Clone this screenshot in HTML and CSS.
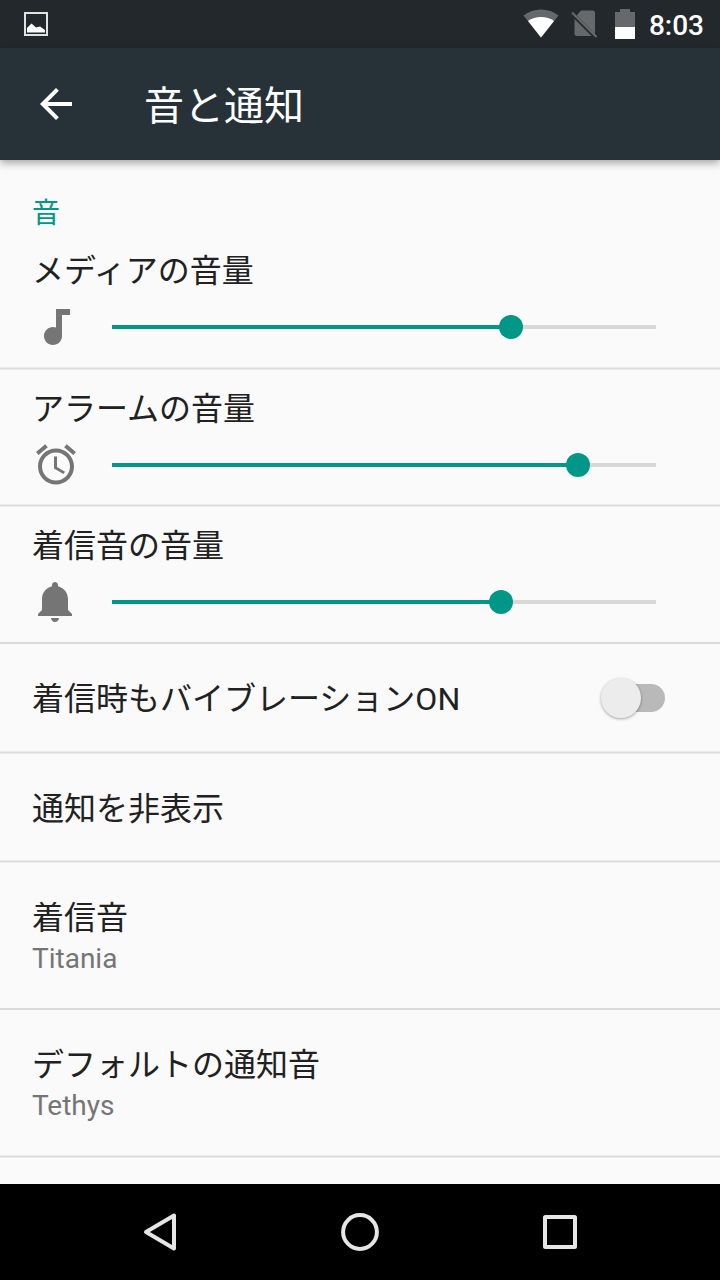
FILE: index.html
```html
<!DOCTYPE html>
<html lang="ja">
<head>
<meta charset="utf-8">
<title>音と通知</title>
<link rel="stylesheet" href="styles.css">
</head>
<body>
<div class="screen">
  <header class="status-bar">
    <svg class="status-picture" width="24" height="24" viewBox="0 0 24 24"><rect x="1" y="1" width="22" height="22" fill="none" stroke="#dfe2e1" stroke-width="2"/><path d="M3 20.500V16L7.500 11.500L12 15.500L16 14.500L21 18V20.500Z" fill="#fff"/></svg>
    <svg class="status-wifi" width="36" height="30" viewBox="0 0 36 30"><path d="M0.500 6.500C10-1.500 26-1.500 35.500 6.500L18 28.500Z" fill="#65696c"/><path d="M5 12C12 6.500 24 6.500 31 12L18 28.500Z" fill="#fff"/></svg>
    <svg class="status-sim" width="28" height="30" viewBox="0 0 28 30"><path d="M10 1.500H21.500Q24 1.500 24 4V25.200L5.700 6.500Z M3.500 10L20.500 27H6Q3.500 27 3.500 24.500Z" fill="#65696c"/><path d="M1 3.500L25.500 28" stroke="#65696c" stroke-width="2.200"/></svg>
    <svg class="status-battery" width="20" height="30" viewBox="0 0 20 30"><path d="M5 0H15V3H20V18H0V3H5Z" fill="#65696c"/><path d="M0 18H20V30H0Z" fill="#fff"/></svg>
    <span class="clock">8:03</span>
  </header>
  <div class="toolbar">
    <svg width="48" height="48" viewBox="0 0 24 24"><path d="M20 11H7.830l5.590-5.590L12 4l-8 8 8 8 1.410-1.410L7.830 13H20v-2z" fill="#fff"/></svg>
    <h1 class="title">音と通知</h1>
  </div>
  <main class="list">
    <section class="row soft volume first">
      <h2 class="category">音</h2>
      <div class="label">メディアの音量</div>
      <div class="control">
        <svg width="48" height="48" viewBox="0 0 24 24"><path d="M12 3v9.260c-.5-.17-1-.26-1.500-.26C8 12 6 14 6 16.500S8 21 10.500 21s4.500-2 4.500-4.500V6h4V3h-7z" fill="#757575"/></svg>
        <div class="slider"><div class="fill" style="width:398.500px"></div><div class="thumb"></div></div>
      </div>
    </section>
    <section class="row soft volume second">
      <div class="label">アラームの音量</div>
      <div class="control">
        <svg width="48" height="48" viewBox="0 0.300 24 24"><path d="M12.500 8H11v6l4.750 2.850.75-1.230-4-2.370V8zm4.840-6.110l4.600 3.860-1.280 1.540-4.600-3.860 1.280-1.540zM6.600 1.890l1.280 1.540-4.600 3.860L2 5.750l4.600-3.860zM12 4c-4.970 0-9 4.030-9 9s4.030 9 9 9 9-4.030 9-9-4.030-9-9-9zm0 16c-3.870 0-7-3.130-7-7s3.130-7 7-7 7 3.130 7 7-3.130 7-7 7z" fill="#757575"/></svg>
        <div class="slider"><div class="fill" style="width:466px"></div><div class="thumb"></div></div>
      </div>
    </section>
    <section class="row volume third">
      <div class="label">着信音の音量</div>
      <div class="control">
        <svg width="48" height="48" viewBox="0 0 24 24"><path d="M11.500 22c1.100 0 2-.9 2-2h-4c0 1.100.9 2 2 2zm6.500-6v-5.500c0-3.070-2.130-5.640-5-6.320V3.500c0-.83-.67-1.500-1.500-1.500S10 2.670 10 3.500v.680c-2.870.68-5 3.250-5 6.320V16l-2 2v1h17v-1l-2-2z" fill="#757575"/></svg>
        <div class="slider"><div class="fill" style="width:388.500px"></div><div class="thumb"></div></div>
      </div>
    </section>
    <section class="row soft single vibrate">
      <div class="label">着信時もバイブレーションON</div>
      <div class="switch"><div class="knob"></div></div>
    </section>
    <section class="row soft single"><div class="label">通知を非表示</div></section>
    <section class="row double">
      <div class="label">着信音</div>
      <div class="summary">Titania</div>
    </section>
    <section class="row soft double last">
      <div class="label">デフォルトの通知音</div>
      <div class="summary">Tethys</div>
    </section>
  </main>
  <nav class="nav-bar">
    <svg width="40" height="40" viewBox="0 0 40 40"><path d="M34 3.500V36.500L6 20Z"/></svg>
    <svg width="40" height="40" viewBox="0 0 40 40"><circle cx="20" cy="20" r="16.900"/></svg>
    <svg width="40" height="40" viewBox="0 0 40 40"><rect x="5" y="5" width="30" height="30" rx="0.500"/></svg>
  </nav>
</div>
</body>
</html>
```
FILE: styles.css
```css
* { box-sizing: border-box; }
body {
  margin: 0;
  font-family: Roboto, "Noto Sans CJK JP", sans-serif;
  color: #212121;
}
svg { display: block; flex: none; }
.screen {
  width: 720px;
  height: 1280px;
  display: flex;
  flex-direction: column;
  overflow: hidden;
  background: #fafafa;
}
.status-bar {
  height: 48px;
  flex: none;
  display: flex;
  align-items: flex-start;
  padding: 0 16px 0 24px;
  background: #23282c;
}
.status-picture { margin-top: 12px; }
.status-wifi { margin: 9px 0 0 auto; }
.status-sim { margin: 9px 0 0 12px; }
.status-battery { margin: 9px 0 0 16px; }
.clock {
  margin-left: 14px;
  font-size: 28px;
  font-weight: 500;
  line-height: 52px;
  color: #fff;
}
.toolbar {
  height: 112px;
  flex: none;
  display: flex;
  align-items: center;
  padding-left: 32px;
  background: #263238;
  box-shadow: 0 3px 8px rgba(0, 0, 0, 0.35);
  z-index: 1;
}
.title {
  margin: 6px 0 0 64px;
  font-size: 40px;
  line-height: 56px;
  font-weight: 400;
  color: #fff;
}
.list { flex: 1; min-height: 0; overflow: hidden; }
.row {
  padding: 0 32px;
  border-bottom: 2px solid #dbdbdb;
}
/* Divider with feathered upper and lower edges */
.row.soft {
  border-bottom: 0;
  background: linear-gradient(#ebebeb 1px, #dbdbdb 1px, #dbdbdb 2px, #ebebeb 2px) left bottom / 100% 3px no-repeat;
}
.label {
  font-size: 32px;
  line-height: 44px;
  white-space: nowrap;
}
.category {
  margin: 0 0 15px;
  font-size: 28px;
  line-height: 40px;
  font-weight: 400;
  color: #009688;
}
.volume { height: 137px; padding-top: 17px; }
.volume.first { height: 210px; padding-top: 34px; }
.control {
  display: flex;
  align-items: center;
  height: 48px;
  margin-top: 10px;
}
.slider {
  display: flex;
  align-items: center;
  width: 544px;
  height: 4px;
  margin-left: 32px;
  background: #d8d8d8;
}
.fill { height: 4px; background: #009688; flex: none; }
.thumb {
  width: 24px;
  height: 24px;
  margin-left: -12px;
  flex: none;
  border-radius: 50%;
  background: #009688;
}
.single {
  height: 109px;
  display: flex;
  align-items: center;
}
.single.vibrate {
  height: 110px;
  justify-content: space-between;
  padding: 0 55px 2px 32px;
}
.vibrate .label { padding-top: 2px; }
.switch {
  display: flex;
  align-items: center;
  width: 56px;
  height: 28px;
  border-radius: 14px;
  background: #b9b9b9;
}
.knob {
  width: 40px;
  height: 40px;
  margin-left: -8px;
  flex: none;
  border-radius: 50%;
  background: #ececec;
  box-shadow: 0 1px 3px rgba(0, 0, 0, 0.35);
}
.double { height: 147px; padding-top: 33px; }
.double.last { height: 148px; }
.summary {
  font-size: 28px;
  line-height: 38px;
  color: #757575;
}
.nav-bar {
  height: 96px;
  flex: none;
  display: flex;
  align-items: center;
  justify-content: center;
  gap: 160px;
  background: #000;
}
.nav-bar svg {
  fill: none;
  stroke: #e6e6e6;
  stroke-width: 4;
  stroke-linejoin: round;
}
```
